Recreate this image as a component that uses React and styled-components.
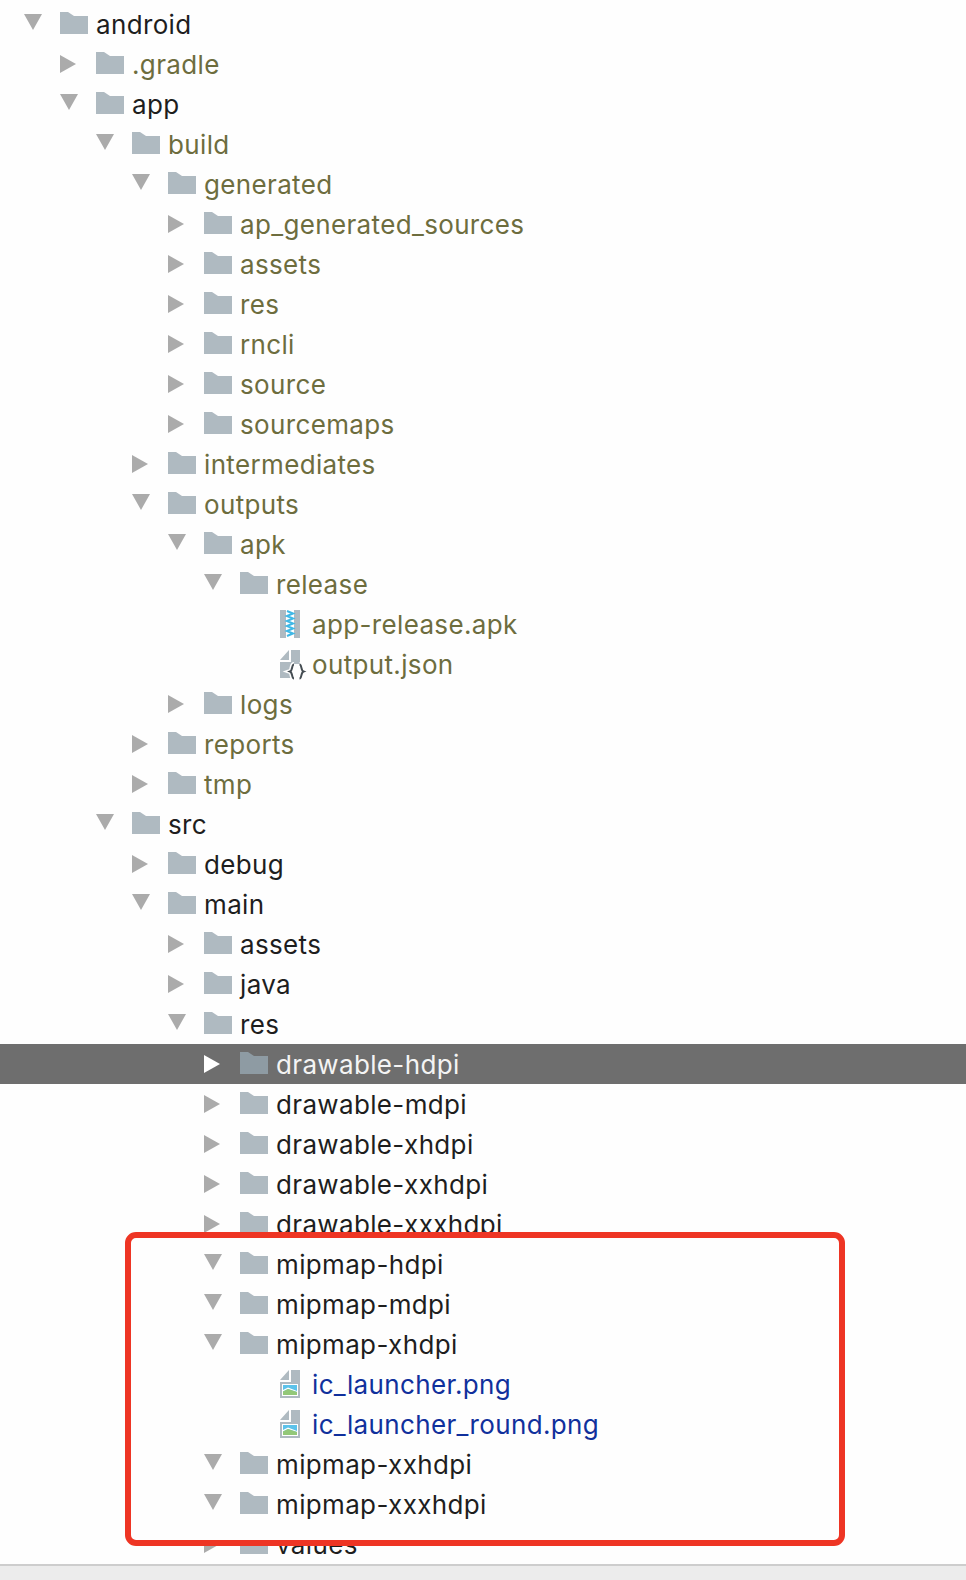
import React from "react";
import styled, { createGlobalStyle } from "styled-components";

const Global = createGlobalStyle`
  html, body { margin: 0; padding: 0; background: #fefefe; }
  body { font-family: Inter, "Liberation Sans", sans-serif; }
`;

const Page = styled.div`
  width: 966px;
  height: 1580px;
  display: flex;
  flex-direction: column;
  overflow: hidden;
`;

const Tree = styled.div`
  flex: 1;
  padding-top: 4px;
`;

const Row = styled.div`
  height: 40px;
  display: flex;
  align-items: flex-start;
  padding-left: ${(p) => 24 + p.$level * 36}px;
  background: ${(p) => (p.$selected ? "#6e6e6e" : "transparent")};
`;

const TwistySlot = styled.span`
  width: 36px;
  height: 40px;
  flex: none;
  display: flex;
  align-items: flex-start;
`;

const TwistySvg = styled.svg`
  display: block;
  margin-top: ${(p) => (p.$open ? 10 : 11)}px;
  fill: ${(p) => (p.$selected ? "#ffffff" : "#ababab")};
`;

const IconSlot = styled.span`
  width: 36px;
  height: 40px;
  flex: none;
  display: flex;
  align-items: flex-start;
`;

const FolderSvg = styled.svg`
  display: block;
  margin-top: 8px;
  fill: ${(p) => (p.$selected ? "#8e9ba3" : "#afbac1")};
`;

const FileSvg = styled.svg`
  display: block;
  margin: 6px 0 0 4px;
  overflow: visible;
`;

const Label = styled.span`
  font-size: 26px;
  line-height: 42px;
  letter-spacing: 0.35px;
  white-space: nowrap;
  color: ${(p) =>
    p.$selected
      ? "#f4f4f4"
      : p.$tone === "olive"
      ? "#6d6d3e"
      : p.$tone === "blue"
      ? "#10309c"
      : "#1e1e1e"};
`;

const Highlighted = styled.div`
  position: relative;
  z-index: 1;
  &::before {
    content: "";
    position: absolute;
    z-index: -1;
    left: 125px;
    top: -12px;
    width: 720px;
    height: 314px;
    box-sizing: border-box;
    border: 6px solid #ee3524;
    border-radius: 11px;
    background: #fefefe;
  }
`;

const StatusBar = styled.div`
  height: 14px;
  flex: none;
  background: #ececec;
  border-top: 2px solid #cdcdcd;
`;

const Twisty = ({ open, selected }) =>
  open ? (
    <TwistySvg $open $selected={selected} width="18" height="16" viewBox="0 0 18 16">
      <path d="M0 0H18L9 16Z" />
    </TwistySvg>
  ) : (
    <TwistySvg $selected={selected} width="16" height="18" viewBox="0 0 16 18">
      <path d="M0 0L16 9L0 18Z" />
    </TwistySvg>
  );

const Folder = ({ selected }) => (
  <FolderSvg $selected={selected} width="28" height="22" viewBox="0 0 28 22">
    <path d="M0 0H8L14 4H28V22H0Z" />
  </FolderSvg>
);

const ZipIcon = () => (
  <FileSvg width="20" height="28" viewBox="0 0 20 28">
    <rect width="20" height="28" fill="#afbac1" />
    <rect x="6" width="8" height="28" fill="#ffffff" />
    <path
      d="M7 1L13 3.5L7 6L13 8.5L7 11L13 13.5L7 16L13 18.5L7 21L13 23.5L7 26"
      fill="none"
      stroke="#3fb8e6"
      strokeWidth="2"
    />
  </FileSvg>
);

const bracePath =
  "M14 14.500C11.500 14.500 12.800 20.500 10 21.500C12.800 22.500 11.500 28.500 14 28.500M19.500 14.500C22 14.500 20.700 20.500 23.500 21.500C20.700 22.500 22 28.500 19.500 28.500";

const JsonIcon = () => (
  <FileSvg width="20" height="28" viewBox="0 0 20 28">
    <path d="M0 10L9 0V10ZM11 0H20V28H0V12H11Z" fill="#afbac1" />
    <rect x="12" y="14" width="10" height="15" fill="#fefefe" />
    <path d={bracePath} fill="none" stroke="#fefefe" strokeWidth="5" />
    <path d={bracePath} fill="none" stroke="#444c52" strokeWidth="2" />
  </FileSvg>
);

const ImageIcon = () => (
  <FileSvg width="20" height="28" viewBox="0 0 20 28">
    <path d="M0 10L9 0V10ZM11 0H20V28H0V12H11Z" fill="#afbac1" />
    <rect x="2" y="14" width="16" height="12" fill="#ffffff" />
    <rect x="3" y="15" width="14" height="10" fill="#5cc2ea" />
    <path d="M3 20L8 17.5L17 21V22L8 19L3 21.5Z" fill="#ffffff" />
    <path d="M3 21.5L8 19L17 22V25H3Z" fill="#93c878" />
  </FileSvg>
);

const fileIcons = { zip: ZipIcon, json: JsonIcon, image: ImageIcon };

const TreeRow = ({ item }) => {
  const FileIcon = item.file && fileIcons[item.file];
  return (
    <Row $level={item.level} $selected={item.selected}>
      <TwistySlot>
        {item.file ? null : <Twisty open={item.open} selected={item.selected} />}
      </TwistySlot>
      <IconSlot>{FileIcon ? <FileIcon /> : <Folder selected={item.selected} />}</IconSlot>
      <Label $tone={item.tone} $selected={item.selected}>
        {item.name}
      </Label>
    </Row>
  );
};

const before = [
  { name: "android", level: 0, open: true },
  { name: ".gradle", level: 1, tone: "olive" },
  { name: "app", level: 1, open: true },
  { name: "build", level: 2, open: true, tone: "olive" },
  { name: "generated", level: 3, open: true, tone: "olive" },
  { name: "ap_generated_sources", level: 4, tone: "olive" },
  { name: "assets", level: 4, tone: "olive" },
  { name: "res", level: 4, tone: "olive" },
  { name: "rncli", level: 4, tone: "olive" },
  { name: "source", level: 4, tone: "olive" },
  { name: "sourcemaps", level: 4, tone: "olive" },
  { name: "intermediates", level: 3, tone: "olive" },
  { name: "outputs", level: 3, open: true, tone: "olive" },
  { name: "apk", level: 4, open: true, tone: "olive" },
  { name: "release", level: 5, open: true, tone: "olive" },
  { name: "app-release.apk", level: 6, file: "zip", tone: "olive" },
  { name: "output.json", level: 6, file: "json", tone: "olive" },
  { name: "logs", level: 4, tone: "olive" },
  { name: "reports", level: 3, tone: "olive" },
  { name: "tmp", level: 3, tone: "olive" },
  { name: "src", level: 2, open: true },
  { name: "debug", level: 3 },
  { name: "main", level: 3, open: true },
  { name: "assets", level: 4 },
  { name: "java", level: 4 },
  { name: "res", level: 4, open: true },
  { name: "drawable-hdpi", level: 5, selected: true },
  { name: "drawable-mdpi", level: 5 },
  { name: "drawable-xhdpi", level: 5 },
  { name: "drawable-xxhdpi", level: 5 },
  { name: "drawable-xxxhdpi", level: 5 },
];

const marked = [
  { name: "mipmap-hdpi", level: 5, open: true },
  { name: "mipmap-mdpi", level: 5, open: true },
  { name: "mipmap-xhdpi", level: 5, open: true },
  { name: "ic_launcher.png", level: 6, file: "image", tone: "blue" },
  { name: "ic_launcher_round.png", level: 6, file: "image", tone: "blue" },
  { name: "mipmap-xxhdpi", level: 5, open: true },
  { name: "mipmap-xxxhdpi", level: 5, open: true },
];

const after = [{ name: "values", level: 5 }];

export default function App() {
  return (
    <Page>
      <Global />
      <Tree>
        {before.map((item, i) => (
          <TreeRow key={i} item={item} />
        ))}
        <Highlighted>
          {marked.map((item, i) => (
            <TreeRow key={i} item={item} />
          ))}
        </Highlighted>
        {after.map((item, i) => (
          <TreeRow key={i} item={item} />
        ))}
      </Tree>
      <StatusBar />
    </Page>
  );
}
